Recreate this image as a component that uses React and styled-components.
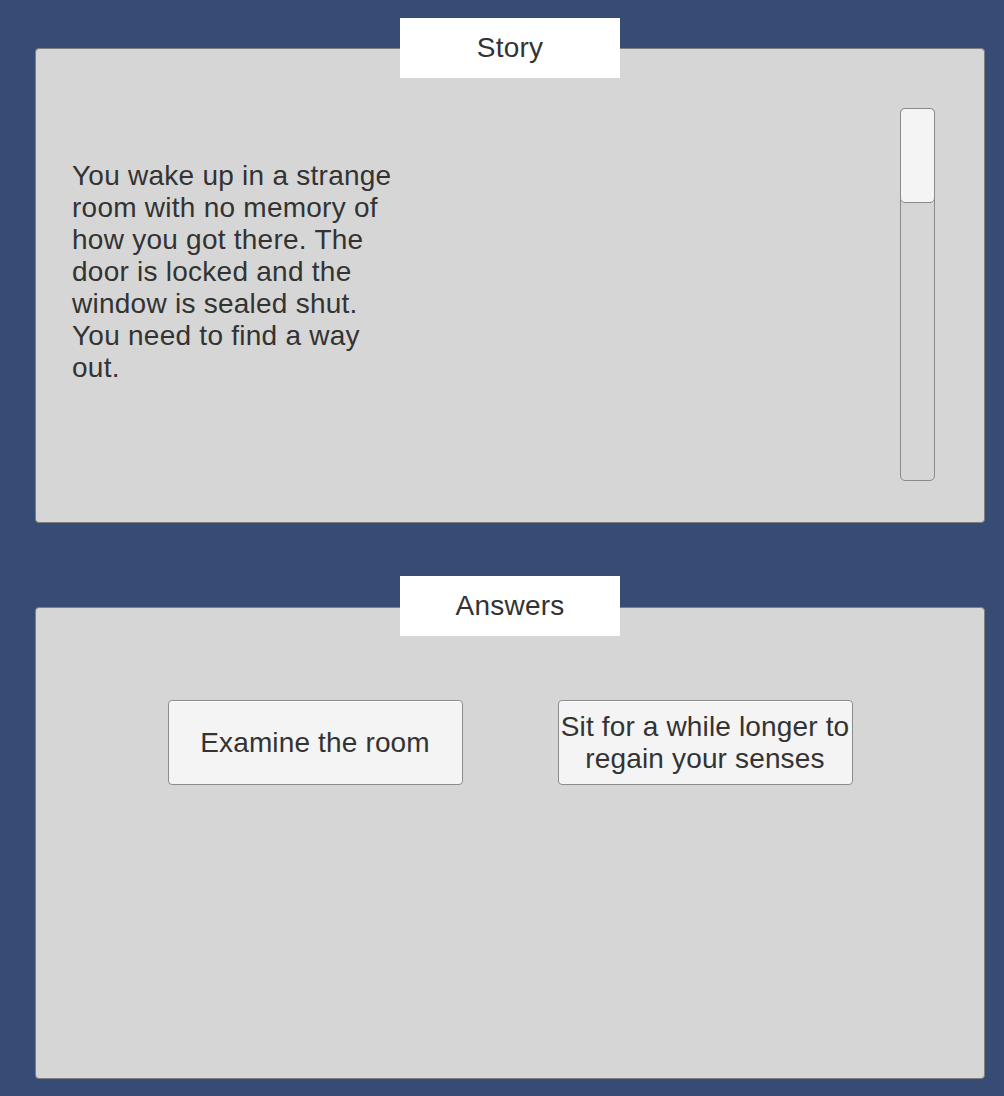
import React from 'react';
import styled, { createGlobalStyle } from 'styled-components';

const GlobalStyle = createGlobalStyle`
body {
    margin: 0;
    background: #374c75;
    font-family: "Liberation Sans", Arial, sans-serif;
}
`

const Page = styled.div`
display: flex;
flex-direction: column;
padding: 18px 19px 0 35px;
`

const Section = styled.section`
display: flex;
flex-direction: column;
align-items: center;
margin-bottom: ${props => props.gap || 0}px;
`

const Tab = styled.div`
position: relative;
z-index: 1;
width: 220px;
height: 60px;
margin-bottom: -${props => props.overlap || 30}px;
background: #ffffff;
color: #333333;
font-size: 28px;
letter-spacing: 0.2px;
display: flex;
align-items: center;
justify-content: center;
`

const Panel = styled.div`
box-sizing: border-box;
align-self: stretch;
height: ${props => props.height}px;
background: #d6d6d6;
border: 1px solid #7f7f7f;
border-radius: 4px;
`

const StoryBody = styled(Panel)`
display: flex;
justify-content: space-between;
align-items: flex-start;
padding: 59px 49px 0 36px;
`

const StoryText = styled.p`
width: 334px;
margin: 52px 0 0 0;
font-size: 28px;
line-height: 32px;
letter-spacing: 0.25px;
color: #333333;
`

const ScrollTrack = styled.div`
box-sizing: border-box;
width: 35px;
height: 373px;
border: 1px solid #8a8a8a;
border-radius: 5px;
display: flex;
flex-direction: column;
`

const ScrollHandle = styled.div`
box-sizing: border-box;
height: 95px;
margin: -1px -1px 0 -1px;
background: #f4f4f4;
border: 1px solid #8a8a8a;
border-radius: 5px;
`

const AnswersBody = styled(Panel)`
display: flex;
justify-content: center;
align-items: flex-start;
gap: 95px;
padding-top: 92px;
`

const AnswerButton = styled.button`
box-sizing: border-box;
width: 295px;
height: 85px;
padding: 0;
background: #f4f4f4;
border: 1px solid #8c8c8c;
border-radius: 4px;
box-shadow: inset 0 1px 0 #ffffff;
font-family: "Liberation Sans", Arial, sans-serif;
font-size: 28px;
line-height: 32px;
letter-spacing: 0.15px;
color: #333333;
text-align: center;
`

const App = () => {
    return (
        <>
            <GlobalStyle />
            <Page>
                <Section gap={53}>
                    <Tab>Story</Tab>
                    <StoryBody height={475}>
                        <StoryText>
                            You wake up in a strange room with no memory of how you got there. The door is locked and the window is sealed shut. You need to find a way out.
                        </StoryText>
                        <ScrollTrack>
                            <ScrollHandle />
                        </ScrollTrack>
                    </StoryBody>
                </Section>
                <Section>
                    <Tab overlap={29}>Answers</Tab>
                    <AnswersBody height={472}>
                        <AnswerButton>Examine the room</AnswerButton>
                        <AnswerButton>Sit for a while longer to regain your senses</AnswerButton>
                    </AnswersBody>
                </Section>
            </Page>
        </>
    );
}

export default App;
